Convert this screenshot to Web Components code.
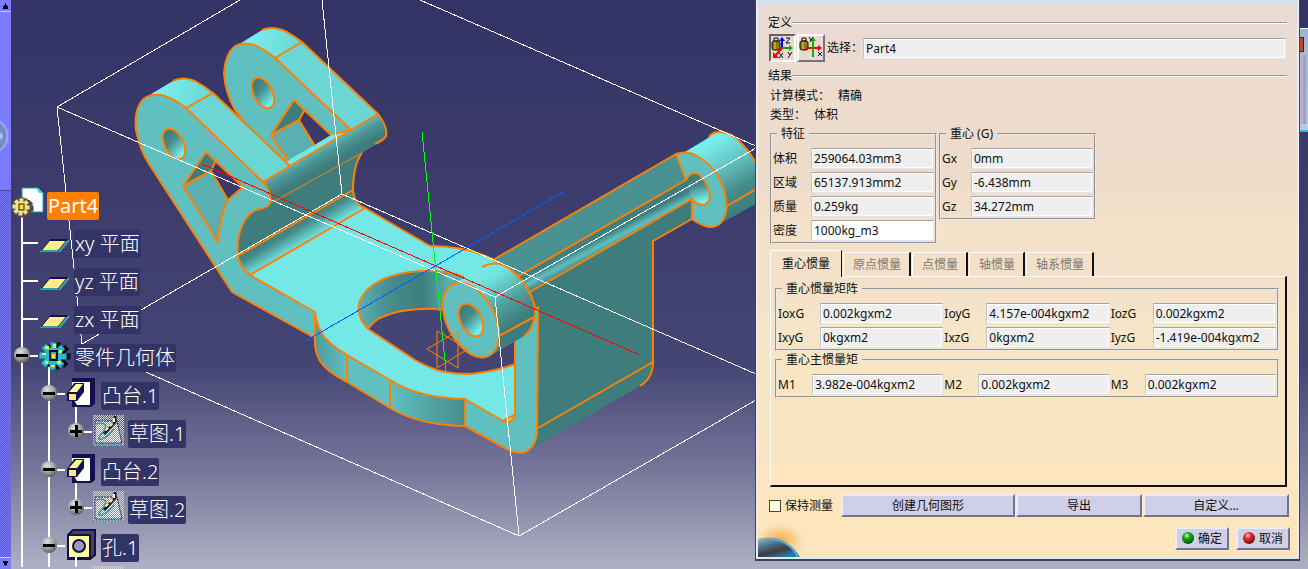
<!DOCTYPE html>
<html lang="zh-CN">
<head>
<meta charset="utf-8">
<title>Part4 - 测量惯量</title>
<style>
  body { margin: 0; background: #333366; font: 12px/16px "Noto Sans", "Noto Sans CJK SC", sans-serif; color: #101010; }
</style>
</head>
<body>
<cad-workspace>
  <tree-scroller slot="scroller"></tree-scroller>
  <part-scene slot="scene"></part-scene>
  <spec-tree slot="tree">
    <spec-node kind="part" label="Part4" selected></spec-node>
    <spec-node kind="plane" label="xy 平面"></spec-node>
    <spec-node kind="plane" label="yz 平面"></spec-node>
    <spec-node kind="plane" label="zx 平面"></spec-node>
    <spec-node kind="body" label="零件几何体"></spec-node>
    <spec-node kind="pad" label="凸台.1"></spec-node>
    <spec-node kind="sketch" label="草图.1"></spec-node>
    <spec-node kind="pad" label="凸台.2"></spec-node>
    <spec-node kind="sketch" label="草图.2"></spec-node>
    <spec-node kind="hole" label="孔.1"></spec-node>
  </spec-tree>
  <measure-dialog slot="dialog"></measure-dialog>
  <window-peek slot="peek"></window-peek>
</cad-workspace>

<script>
class ShadowElement extends HTMLElement {
  constructor() {
    super();
    this.attachShadow({ mode: "open" });
  }
  connectedCallback() {
    const t = document.createElement("template");
    t.innerHTML = this.render();
    this.shadowRoot.replaceChildren(t.content.cloneNode(true));
  }
}

customElements.define("cad-workspace", class extends ShadowElement {
  render() {
    return `<style>
      :host { position: relative; display: grid; grid-template-columns: 11px 1fr auto 8px; min-height: 100vh; overflow: hidden;
        background: linear-gradient(#333366 0, #3c3b6b 32%, #454575 64%, #77779c 83%, #b0b0c5 100%); }
      ::slotted([slot=scene]) { position: absolute; inset: 0; }
      ::slotted([slot=scroller]), ::slotted([slot=tree]), ::slotted([slot=dialog]), ::slotted([slot=peek]) { position: relative; }
      ::slotted([slot=tree]) { grid-column: 2; height: 0; }
    </style>
    <slot name="scene"></slot><slot name="scroller"></slot><slot name="tree"></slot><slot name="dialog"></slot><slot name="peek"></slot>`;
  }
});

customElements.define("tree-scroller", class extends ShadowElement {
  render() {
    return `<style>
      :host { display: flex; flex-direction: column; background: #7b7bff; overflow: hidden; }
      button { all: unset; flex: none; height: 11px; border-bottom: 1px solid #c8c8ff; display: grid; place-items: center; }
      button.down { border: 0; border-top: 1px solid #c8c8ff; }
      .thumb { flex: 178 0 0; }
      .track { flex: 368 0 0; background: repeating-conic-gradient(#7b7bff 0 25%, #5a5aae 0 50%) 0 0 / 2px 2px; border-top: 1px solid #4a4a90; }
      svg { display: block; }
    </style>
    <button type="button" aria-label="向上"><svg width="7" height="7"><path d="M3 1h1v2h1v1h1v3H1V4h1V3h1z"/></svg></button>
    <div class="thumb"><svg width="11" height="178"><circle cx="-10" cy="124" r="17.500" fill="#6f8fc8" stroke="#a5a5f2" stroke-width="2"/><path d="M-2 121h3v-2l2 5-2 5v-2h-3z" fill="#b9b9f5"/></svg></div>
    <div class="track"></div>
    <button type="button" class="down" aria-label="向下"><svg width="7" height="7"><path d="M1 1h5v2H5v2H4v1H3V5H2V3H1z"/></svg></button>`;
  }
});

customElements.define("part-scene", class extends ShadowElement {
  render() {
    return `<style>
      :host { display: block; overflow: hidden; }
      svg { display: block; }
      .edge { fill: none; stroke: #ff8000; stroke-width: 2; stroke-linejoin: round; }
      .thin { fill: none; stroke: #ff8000; stroke-width: 1; }
      .box { fill: none; stroke: #fff; stroke-width: 1; }
    </style>
    <svg width="756" height="569" role="img" aria-label="Part4">
      <defs>
        <linearGradient id="roll" gradientUnits="userSpaceOnUse" x1="310" y1="150" x2="323" y2="173"><stop offset="0" stop-color="#66c8c8"/><stop offset=".35" stop-color="#4f9b9b"/><stop offset=".8" stop-color="#3f7d7d"/></linearGradient>
        <linearGradient id="fillet" gradientUnits="userSpaceOnUse" x1="295" y1="222" x2="307" y2="242"><stop offset="0" stop-color="#3f7d7d"/><stop offset=".3" stop-color="#468a8a"/><stop offset="1" stop-color="#72e6e4"/></linearGradient>
        <linearGradient id="bore" x1=".4" y1="0" x2=".6" y2="1"><stop offset=".15" stop-color="#3f7d7d"/><stop offset=".4" stop-color="#478c8c"/><stop offset=".9" stop-color="#78eeec"/></linearGradient>
        <linearGradient id="wall" gradientUnits="userSpaceOnUse" x1="359" y1="0" x2="450" y2="0"><stop offset="0" stop-color="#5ab0b0"/><stop offset=".35" stop-color="#478b8b"/><stop offset=".7" stop-color="#3f7d7d"/><stop offset="1" stop-color="#5ab2b2"/></linearGradient>
        <linearGradient id="side1" gradientUnits="userSpaceOnUse" x1="315" y1="0" x2="347" y2="0"><stop offset="0" stop-color="#4e9b9b"/><stop offset="1" stop-color="#60c0c0"/></linearGradient>
        <linearGradient id="side2" gradientUnits="userSpaceOnUse" x1="390" y1="0" x2="465" y2="0"><stop offset="0" stop-color="#60c0c0"/><stop offset="1" stop-color="#478c8c"/></linearGradient>
        <linearGradient id="boss" gradientUnits="userSpaceOnUse" x1="470" y1="268" x2="518" y2="342"><stop offset="0" stop-color="#78eeec"/><stop offset=".25" stop-color="#70e0de"/><stop offset=".55" stop-color="#519f9f"/><stop offset=".8" stop-color="#3f7d7d"/></linearGradient>
        <linearGradient id="boss2" gradientUnits="userSpaceOnUse" x1="703" y1="138" x2="745" y2="208"><stop offset=".1" stop-color="#78eeec"/><stop offset=".4" stop-color="#66c8c8"/><stop offset=".75" stop-color="#478b8b"/><stop offset="1" stop-color="#3f7d7d"/></linearGradient>
        <linearGradient id="groove" gradientUnits="userSpaceOnUse" x1="600" y1="228" x2="610" y2="247"><stop offset="0" stop-color="#3f7d7d"/><stop offset=".4" stop-color="#418080"/><stop offset=".75" stop-color="#60c0c0"/><stop offset="1" stop-color="#4a9292"/></linearGradient>
        <linearGradient id="cap" gradientUnits="userSpaceOnUse" x1="160" y1="85" x2="205" y2="100"><stop offset="0" stop-color="#79efee"/><stop offset="1" stop-color="#6cd8d6"/></linearGradient>
        <linearGradient id="cap2" gradientUnits="userSpaceOnUse" x1="248" y1="35" x2="295" y2="50"><stop offset="0" stop-color="#79efee"/><stop offset="1" stop-color="#6cd8d6"/></linearGradient>
      </defs>

      <!-- far lug -->
      <path fill="#6bd6d4" d="M275 58 302 42 378 114 290 166 350 130Z"/>
      <path fill="url(#cap2)" d="M241 43 262 30Q273 26 287 32 294 36 302 42L275 58Q262 46 248 43Z"/>
      <path fill="#60c0c0" d="M275 58Q262 48 254 45 241 41 234 47 225 55 224 73 225 92 235 110L243 120 289 166 320 147 351 130Z"/>
      <path fill="#3f7d7d" d="M294 100 304 111 299 120 271 135Z"/>
      <path fill="#5ab0b0" d="M271 135 299 120 315 146 288 161Z"/>
      <path fill="#3a396a" d="M304 111 331 135 315 146 299 120Z"/>
      <path fill="#73e8e6" d="M287 161 333 134 351 130 289 166Z"/>
      <ellipse cx="263" cy="93" rx="9.500" ry="16.500" transform="rotate(-27 263 93)" fill="url(#bore)"/>
      <g class="edge">
        <path d="M262 30Q273 25 287 32 294 36 302 42L378 114M275 58 302 42M275 58Q262 48 254 45 241 41 234 47 225 55 224 73 225 92 235 110L243 120M275 58 351 130 333 134M294 100 271 135 288 161M294 100 331 135M304 111 299 120 271 135M299 120 315 146"/>
        <ellipse cx="263" cy="93" rx="9.500" ry="16.500" transform="rotate(-27 263 93)"/>
      </g>

      <!-- bent plate -->
      <path fill="#3f7d7d" d="M271 202 362 153Q355 165 354 190L238 256Q237 222 252 211L267 208Z"/>
      <path fill="url(#roll)" d="M263 182 378 114Q388 127 386 136 384 140 362 153L271 203Q271 190 263 182Z"/>
      <path fill="url(#fillet)" d="M238 256 353 190Q354 203 365 208L250 275Q240 268 238 256Z"/>

      <!-- near lug and side wall -->
      <path fill="#6bd6d4" d="M186 108 213 93 290 166 263 182Z"/>
      <path fill="url(#cap)" d="M151 94 173 81Q183 76 195 81 204 86 213 93L186 108Q172 96 158 95Z"/>
      <path fill="#60c0c0" d="M186 108Q174 99 165 96 148 92 141 102 134 112 136 130 140 150 149 164L232 292 315 338 315 312 250 275Q240 268 238 256 236 235 245 220 252 210 260 209 268 208 270 203 272 192 263 182Z"/>
      <path fill="#3f7d7d" d="M206 152 215 162 211 171 183 186Z"/>
      <path fill="#5ab0b0" d="M183 186 211 171 228 200Q219 217 218 242Z"/>
      <path fill="#3b3a6b" d="M215 162 243 187 228 200 211 171Z"/>
      <ellipse cx="174" cy="144" rx="9.500" ry="16.500" transform="rotate(-27 174 144)" fill="url(#bore)"/>

      <!-- floor -->
      <path fill="#73e8e6" d="M250 275 365 208 430 246Q470 246 498 262L520 300 515 417Q511 424 503 421L465 399Q432 398 410 390 398 386 390 380L347 355Q318 342 316 320L315 312Z"/>
      <path fill="#454575" d="M368 329Q352 311 363 295 378 274 420 271 445 269 464 277L515 330V364Q498 371 470 374 450 374 437 370 425 366 415 360Z"/>
      <path fill="url(#wall)" d="M368 329Q352 311 363 295 378 274 420 271 450 269 464 277L446 310Q436 308 420 309 396 310 380 318 373 322 368 329Z"/>
      <path fill="url(#side1)" d="M315 312Q316 330 330 343 337 349 347 355V382Q326 371 320 361 314 350 315 338Z"/>
      <path fill="#60c0c0" d="M347 355 390 380V408L347 382Z"/>
      <path fill="url(#side2)" d="M390 380Q418 398 465 399V426Q418 425 390 408Z"/>

      <!-- right-hand plate -->
      <path fill="#4a9292" d="M493 260 676 154 687 180 517 277Z"/>
      <path fill="url(#groove)" d="M517 277 687 179 692 199 528 293Z"/>
      <path fill="#3f7d7d" d="M528 293 692 199V219L653 241V362Q653 378 640 386L535 447V300Z"/>
      <path fill="#60c0c0" d="M515 330 538 307V428Q538 453 517 453 510 451 503 447L465 426V399L503 421Q513 424 515 415Z"/>

      <!-- far boss -->
      <path fill="url(#boss2)" d="M685 152 708 138Q712 132 720 132 732 132 742 144 750 152 756 163V204L716 226 726 206Q727 180 704 161Z"/>
      <path fill="#60c0c0" d="M676 154Q687 150 697 156 713 165 720 180 728 197 726 212 722 228 709 227 700 225 692 219V199Q697 205 704 205 712 202 709 190 705 179 698 174 690 171 686 180Z"/>
      <path fill="url(#bore)" d="M686 180Q692 170 700 176 706 181 709 190 711 203 704 205 697 204 692 199Z"/>

      <!-- near boss -->
      <path fill="url(#boss)" d="M452 285 483 266Q497 260 510 269 522 279 530 293 536 305 535 315 533 330 524 336L490 356Z"/>
      <ellipse cx="471" cy="320" rx="24" ry="40" transform="rotate(-27 471 320)" fill="#60c0c0"/>
      <ellipse cx="471" cy="320" rx="10.500" ry="17.500" transform="rotate(-27 471 320)" fill="url(#bore)"/>

      <g class="edge">
        <path d="M173 81Q183 76 195 81 204 86 213 93L290 166M186 108 213 93M186 108Q174 99 165 96 148 92 141 102 134 112 136 130 140 150 149 164L232 292 315 338M186 108 263 182Q272 192 270 203 268 208 260 209 252 210 245 220 236 235 238 256 240 268 250 275L315 312V338"/>
        <path d="M263 182 378 114Q388 127 386 136 384 140 375 144M238 256 353 190M250 275 365 208 430 246M362 153Q353 165 353 190 354 204 365 208"/>
        <path d="M206 152 183 186 218 242Q219 217 228 200L243 187 206 152M215 162 211 171 183 186M211 171 228 200"/>
        <ellipse cx="174" cy="144" rx="9.500" ry="16.500" transform="rotate(-27 174 144)"/>
        <path d="M430 246Q470 246 498 262M315 312Q316 330 330 343 337 349 347 355L390 380Q418 398 465 399L503 421Q513 424 515 415V342M503 421 514 415"/>
        <path d="M315 338Q314 350 320 361 326 371 347 382L390 408Q418 425 465 426L503 447Q517 456 527 451 538 443 537 428L538 307 534 311M347 355V382M390 380V408M465 399V426"/>
        <path d="M464 277Q450 270 420 271 378 274 363 295 352 311 368 329L415 360Q425 366 437 370 450 374 470 374 498 371 515 364M368 329Q373 322 380 318 396 310 420 309 436 308 442 310"/>
        <path d="M493 260 676 154 686 180 517 277M528 293 692 199V219L653 241V362Q653 378 640 386M538 428 653 362"/>
        <path d="M709 137Q712 132 720 132 732 132 742 144 750 152 756 163M676 154Q687 150 697 156 713 165 720 180 728 197 726 212 722 228 709 227 700 225 692 219M692 199Q697 205 704 205 712 202 709 190 705 179 698 174 690 171 686 180M727 206 756 189"/>
        <path d="M482 267Q497 259 510 269 522 279 530 293 536 305 535 315 533 330 524 336M499 336 534 317"/>
        <ellipse cx="471" cy="320" rx="24" ry="40" transform="rotate(-27 471 320)"/>
        <ellipse cx="471" cy="320" rx="10.500" ry="17.500" transform="rotate(-27 471 320)"/>
      </g>
      <path class="thin" d="M271 203 362 153M437 331V368M458 331V368M427 349 458 331M427 349 458 368M468 349 437 331M468 349 437 368"/>

      <g class="box" shape-rendering="crispEdges">
        <path d="M240 0 57 107 82 344 342 194 322 0M57 107 495 297 756 148M82 344 519 536 756 400M342 194 756 374M420 0 756 146M495 297 519 536"/>
      </g>
      <g fill="none" shape-rendering="crispEdges">
        <path stroke="#f00" d="M202 164 640 355"/>
        <path stroke="#0f0" d="M422 132 446 371"/>
        <path stroke="#0060ff" d="M565 191 304 342"/>
      </g>
    </svg>`;
  }
});

customElements.define("spec-tree", class extends ShadowElement {
  render() {
    return `<style>
      :host { display: block; padding-top: 187px; justify-self: start; }
      div { display: flex; flex-direction: column; }
    </style><div role="tree"><slot></slot></div>`;
  }
});

const gear = (cx, cy, r, fill, edge) => {
  let teeth = "";
  for (let a = 0; a < 360; a += 45) teeth += `<rect x="${cx - 2}" y="${cy - r}" width="5" height="${r}" fill="${fill}" stroke="${edge}" transform="rotate(${a} ${cx} ${cy})"/>`;
  return teeth + `<circle cx="${cx}" cy="${cy}" r="${r * 0.68}" fill="${fill}"/>`;
};
const ball = (cx, plus) => `<circle cx="${cx}" cy="16" r="8" fill="url(#ball)"/><path d="M${cx - 6} 15h12v3h-12z${plus ? `M${cx - 1} 10h3v12h-3z` : ""}"/>`;
const line = (x, y, w, h) => `<rect x="${x}" y="${y}" width="${w}" height="${h}" fill="#fff"/>`;
const trunk = line(10, 0, 2, 38);
const ART = {
  part: [36, () => line(10, 29, 2, 9) +
    `<path d="M11 1h16l5 5v19H11z" fill="#fff" stroke="#18a0a8"/><path d="M25 1h2l5 5h-4z" fill="#40d8e0"/><g transform="translate(3 1)">${gear(10, 20, 9, "#4a4650", "#4a4650")}</g>${gear(10, 20, 9, "#f5df95", "#5a5030")}<rect x="8" y="17" width="5" height="6" fill="#f4e800" stroke="#222"/>`],
  plane: [63, () => trunk + line(12, 17, 15, 2) +
    `<path d="M39 15H57L49 26H30z" fill="#ffee88"/><path d="M39 15H57" stroke="#141050" stroke-width="2"/><path d="M58 15 49 26H29" fill="none" stroke="#30a0a8" stroke-width="2"/><path d="M39 15 30 26M55 16 47 26" stroke="#141050" fill="none"/>`],
  body: [63, () => trunk + line(19, 16, 8, 2) + line(37, 28, 2, 10) + ball(11) +
    `<g transform="translate(3 0)">${gear(43, 17, 13, "#0a0a18", "#0a0a18")}</g>${gear(42, 17, 13, "#22c0cc", "#22c0cc")}<g fill="#f6f03c"><path d="M34 7h4v3h-4zM42 5h3v4h-3zM31 14h4v2h-4zM48 11h3v3h-3zM34 22h3v3h-3zM46 22h4v3h-4zM40 26h4v2h-4z"/></g><rect x="39" y="12" width="7" height="9" fill="#22c0cc" stroke="#0a0a18" stroke-width="2"/><rect x="41" y="15" width="3" height="4" fill="#f6f03c"/>`],
  pad: [90, () => trunk + line(37, 0, 2, 38) + line(46, 16, 8, 2) + line(64, 30, 2, 8) + ball(38) +
    `<path d="M61 1H84V27L80 30H61z" fill="#141050"/><path d="M61 5H79V28H66L61 20z" fill="#fff"/><path d="M56 16 63 6H73V15L66 24H56z" fill="#141050"/><path d="M58 15 65 7H72L66 15z" fill="#ffff9c"/><path d="M58 17H65V23H58z" fill="#ffee70"/>`],
  sketch: [117, () => trunk + line(37, 0, 2, 38) + line(64, 0, 2, 9) + line(73, 16, 8, 2) + ball(65, true) +
    `<rect x="82" y="0" width="31" height="31" fill="url(#dots)"/><path d="M84 6H106L111 28H84z" fill="url(#mesh)" stroke="#141050" stroke-dasharray="2 1"/><path d="M84 9Q100 6 92 17 84 26 91 24 98 21 103 14" fill="none" stroke="#3898a0" stroke-width="1.500"/><path d="M104 1V7L93 19" fill="none" stroke="#141050" stroke-width="3"/><path d="M103 3V7L93 17" fill="none" stroke="#fff38c" stroke-width="2" stroke-dasharray="4 2"/><path d="M82 30H113" stroke="#40a8a8" stroke-width="2" stroke-dasharray="2 1"/>`],
  hole: [90, () => trunk + line(37, 0, 2, 38) + line(46, 16, 8, 2) + ball(38) +
    `<path d="M57 6 62 1H84V26L79 30H57z" fill="#484848" stroke="#141050" stroke-width="2"/><rect x="57" y="6" width="22" height="23" fill="#ffff9c" stroke="#141050" stroke-width="2"/><circle cx="68" cy="17" r="6" fill="#9a9ab4" stroke="#141050" stroke-width="2"/>` + line(64, 27, 2, 11) + `<rect x="82" y="37" width="31" height="3" fill="url(#dots)"/>`],
};
customElements.define("spec-node", class extends ShadowElement {
  render() {
    const [w, art] = ART[this.getAttribute("kind")];
    return `<style>
      :host { display: flex; align-items: center; height: 38px; font: 300 20px/28px "Noto Sans", "Noto Sans CJK SC", sans-serif; color: #fff; }
      svg { display: block; overflow: visible; flex: none; }
      span { padding: 0 1px; border-radius: 2px; background: #333366; white-space: nowrap; }
      :host([selected]) span { background: #ff8000; font-weight: 400; }
    </style>
    <svg width="${w}" height="38" aria-hidden="true"><defs>
      <radialGradient id="ball" cx=".4" cy=".3" r=".7"><stop offset="0" stop-color="#e0e0e0"/><stop offset=".6" stop-color="#a0a0a0"/><stop offset="1" stop-color="#606060"/></radialGradient>
      <pattern id="dots" width="2" height="2" patternUnits="userSpaceOnUse"><path d="M0 0h1v1h-1zM1 1h1v1h-1z" fill="#d0d0d4"/></pattern>
      <pattern id="mesh" width="2" height="2" patternUnits="userSpaceOnUse"><path d="M0 0h2v2h-2z" fill="#8c8cac"/><path d="M0 0h1v1h-1zM1 1h1v1h-1z" fill="#fff"/></pattern>
    </defs>${art()}</svg><span role="treeitem">${this.getAttribute("label")}</span>`;
  }
});

customElements.define("measure-field", class extends ShadowElement {
  render() {
    return `<style>
      :host { display: flex; align-items: center; height: 21px; min-width: 0; }
      label { flex: none; width: var(--label-width, 38px); white-space: nowrap; }
      input { flex: 1; min-width: 0; height: 21px; box-sizing: border-box; margin: 0; padding: 0 2px; border: 1px solid; border-color: #a4a4a4 #e2e4ee #e2e4ee #c4c4c8; outline: 0;
        box-shadow: inset 0 0 0 1px #fff; background: #efefef; color: inherit; font: inherit; border-radius: 0; }
      :host([editable]) input { background: #fff; }
    </style>
    <label for="v">${this.getAttribute("label")}</label><input id="v" type="text" value="${this.getAttribute("value")}"${this.hasAttribute("editable") ? "" : " readonly"}>`;
  }
});

customElements.define("field-group", class extends ShadowElement {
  render() {
    return `<style>
      :host { display: block; }
      fieldset { position: relative; margin: 0; min-width: 0; padding: 6px 2px 2px 1px; border: 1px solid #999; box-shadow: none; }
      fieldset { border: 1px solid #999; padding: 6px 2px 2px; }
      legend { margin-left: 4px; padding: 0 4px; height: 16px; }
      div { display: grid; grid-template-columns: repeat(var(--columns, 1), minmax(0, 1fr)); gap: 3px 1px; }
      fieldset { border: 2px groove #fff; border-color: #e8e8e8; padding: 6px 1px 1px; }
    </style>
    <fieldset><legend>${this.getAttribute("legend")}</legend><div><slot></slot></div></fieldset>`;
  }
});

customElements.define("section-rule", class extends ShadowElement {
  render() {
    return `<style>
      :host { display: flex; align-items: center; height: 16px; }
      :host::after { content: ""; flex: 1; height: 1px; background: #999; border-bottom: 1px solid #fff; }
    </style><slot></slot>`;
  }
});

customElements.define("bevel-button", class extends ShadowElement {
  render() {
    return `<style>
      :host { display: block; }
      button { width: 100%; height: 23px; margin: 0; padding: 0; display: flex; align-items: center; justify-content: center; gap: 3px; border: 2px solid; border-color: #ececf6 #73738c #73738c #ececf6; background: #cfcfe7; color: inherit; font: inherit; white-space: nowrap; border-radius: 0; }
    </style><button type="button"><slot></slot></button>`;
  }
});

customElements.define("tab-strip", class extends ShadowElement {
  render() {
    const tabs = this.getAttribute("tabs").split(" ");
    return `<style>
      :host { display: block; }
      [role=tablist] { display: flex; align-items: flex-end; gap: 1px; height: 26px; }
      button { height: 24px; margin: 0; padding: 0 8px; border: solid; border-width: 1px 2px 0 1px; border-color: #fff #111 #fff #fff; border-radius: 2px 0 0 0; background: none; color: #7d7872; font: inherit; white-space: nowrap; }
      button[aria-selected=true] { height: 27px; margin-bottom: -1px; padding: 0 11px; border-right-width: 1px; background: #f3e1c9; color: #101010; }
      button:nth-child(n+2) { padding: 0 8px 0 9px; }
      section { box-sizing: border-box; min-height: 211px; padding: 4px 6px 4px 4px; border: solid; border-width: 1px 2px 2px 1px; border-color: #fff #111 #111 #fff; display: flex; flex-direction: column; gap: 1px; }
    </style>
    <div role="tablist">${tabs.map((t, i) => `<button type="button" role="tab" aria-selected="${i === 0}">${t}</button>`).join("")}</div>
    <section role="tabpanel"><slot></slot></section>`;
  }
});

const weight = `<path d="M3 2h4v3H3z" fill="none" stroke="#111"/><rect x="1" y="5" width="8" height="9" rx="2" fill="#8f7a10" stroke="#111"/><path d="M4 6v7" stroke="#e6d24a"/>`;
customElements.define("measure-dialog", class extends ShadowElement {
  render() {
    return `<style>
      :host { display: block; align-self: start; width: 545px; box-sizing: border-box; border: solid; border-width: 0 1px 2px; border-color: #444450; }
      form { position: relative; padding: 11px 10px 7px; border: solid; border-width: 4px 2px 2px; border-color: #d5e1ef #e9ebf5 #dcebf2 #e9ebf5;
        background: linear-gradient(#e8dad6 0, #eddccc 18%, #eedccb 32%, #f4e2c8 42%, #f2e0ca 48%, #f6e5c6 60%, #fde5be 90%); }
      .planet { position: absolute; left: 0; bottom: 0; display: block; }
      .pick { display: flex; align-items: center; gap: 1px; height: 28px; margin: 3px 1px 6px; }
      .pick button { flex: none; width: 28px; height: 28px; margin: 0; padding: 0; border: 2px solid; border-color: #fff #77737a #77737a #fff; background: #ead9d2; }
      .pick button.on { border-color: #66626a #fff #fff #66626a; width: 27px; }
      .pick svg { display: block; }
      .pick measure-field { flex: 1; --label-width: 36px; margin-left: 1px; }
      dl { margin: 2px 0 0 2px; line-height: 19px; }
      dl div { display: flex; gap: 8px; }
      dd, dt { margin: 0; }
      .groups { display: flex; align-items: flex-start; gap: 2px; margin: 2px 0 6px 2px; }
      .traits { width: 167px; }
      .centre { width: 157px; --label-width: 29px; }
      .matrix { --columns: 3; --label-width: 42px; }
      .principal { --columns: 3; --label-width: 34px; }
      tab-strip { margin-left: 2px; }
      .actions { display: flex; align-items: center; gap: 1px; margin: 7px -2px 0 1px; }
      .keep { display: flex; align-items: center; gap: 4px; width: 71px; flex: none; white-space: nowrap; }
      .keep input { appearance: none; width: 12px; height: 12px; margin: 0; border: 1px solid #444; background: #ffffe0; }
      .wide { flex: 174; } .mid { flex: 126; } .last { flex: 146; }
      .confirm { display: flex; justify-content: flex-end; gap: 7px; margin: 10px -3px 0 0; }
      .confirm bevel-button { width: 54px; }
      .led { display: block; }
    </style>
    <form>
      <svg class="planet" width="52" height="36" aria-hidden="true"><defs>
        <radialGradient id="glow"><stop offset="0" stop-color="#f5a040"/><stop offset=".6" stop-color="#f9cf88" stop-opacity=".7"/><stop offset="1" stop-color="#fde5be" stop-opacity="0"/></radialGradient>
        <linearGradient id="globe" x1="0" y1="0" x2=".6" y2="1"><stop offset="0" stop-color="#9cc4cc"/><stop offset=".4" stop-color="#4a7288"/><stop offset=".7" stop-color="#403c40"/><stop offset="1" stop-color="#2878b0"/></linearGradient></defs>
        <ellipse cx="22" cy="20" rx="28" ry="20" fill="url(#glow)"/><path d="M0 18Q14 14 27 21 37 27 42 36H0z" fill="url(#globe)"/><path d="M14 18Q32 20 40 36" fill="none" stroke="#58acd8" stroke-width="2"/></svg>
      <section-rule>定义</section-rule>
      <div class="pick">
        <button type="button" class="on" aria-label="测量惯量"><svg width="23" height="24">${weight}<g fill="none" stroke-width="2"><path d="M11 12V3" stroke="#00f"/><path d="M8 5 11 1 14 5z" fill="#00f"/><path d="M11 12H20" stroke="#0a0"/><path d="M18 9 22 12 18 15z" fill="#0b0"/><path d="M11 12 4 20" stroke="#f00"/><path d="M2 16V22H8z" fill="#f00"/></g><path d="M15 2H19L15 7H19M8 17 12 22M12 17 8 22M17 16 19 19 21 16M19 19 17 22" fill="none" stroke="#111"/></svg></button>
        <button type="button" aria-label="测量2D惯量"><svg width="24" height="24">${weight}<path d="M14 21V4M10 12H21" stroke="#0a0" stroke-width="2"/><path d="M7 12H20" stroke="#f00" stroke-width="2"/><path d="M19 9 23 12 19 15z" fill="#f00"/><path d="M14 20V4" stroke="#0b0" stroke-width="2"/><path d="M11 5 14 1 17 5z" fill="#0b0"/><path d="M10 1 12 4M14 1 11 6M19 16 23 20M23 16 19 20" fill="none" stroke="#111"/></svg></button>
        <measure-field label="选择：" value="Part4"></measure-field>
      </div>
      <section-rule>结果</section-rule>
      <dl><div><dt>计算模式：</dt><dd>精确</dd></div><div><dt>类型：</dt><dd>体积</dd></div></dl>
      <div class="groups">
        <field-group class="traits" legend="特征">
          <measure-field label="体积" value="259064.03mm3"></measure-field>
          <measure-field label="区域" value="65137.913mm2"></measure-field>
          <measure-field label="质量" value="0.259kg"></measure-field>
          <measure-field label="密度" value="1000kg_m3" editable></measure-field>
        </field-group>
        <field-group class="centre" legend="重心 (G)">
          <measure-field label="Gx" value="0mm"></measure-field>
          <measure-field label="Gy" value="-6.438mm"></measure-field>
          <measure-field label="Gz" value="34.272mm"></measure-field>
        </field-group>
      </div>
      <tab-strip tabs="重心惯量 原点惯量 点惯量 轴惯量 轴系惯量">
        <field-group class="matrix" legend="重心惯量矩阵">
          <measure-field label="IoxG" value="0.002kgxm2"></measure-field>
          <measure-field label="IoyG" value="4.157e-004kgxm2"></measure-field>
          <measure-field label="IozG" value="0.002kgxm2"></measure-field>
          <measure-field label="IxyG" value="0kgxm2"></measure-field>
          <measure-field label="IxzG" value="0kgxm2"></measure-field>
          <measure-field label="IyzG" value="-1.419e-004kgxm2"></measure-field>
        </field-group>
        <field-group class="principal" legend="重心主惯量矩">
          <measure-field label="M1" value="3.982e-004kgxm2"></measure-field>
          <measure-field label="M2" value="0.002kgxm2"></measure-field>
          <measure-field label="M3" value="0.002kgxm2"></measure-field>
        </field-group>
      </tab-strip>
      <div class="actions">
        <label class="keep"><input type="checkbox">保持测量</label>
        <bevel-button class="wide">创建几何图形</bevel-button>
        <bevel-button class="mid">导出</bevel-button>
        <bevel-button class="last">自定义...</bevel-button>
      </div>
      <div class="confirm">
        <bevel-button><svg class="led" width="13" height="13"><defs><radialGradient id="g" cx=".4" cy=".3" r=".7"><stop offset="0" stop-color="#c8ffc0"/><stop offset=".35" stop-color="#18b018"/><stop offset="1" stop-color="#045004"/></radialGradient></defs><circle cx="6" cy="6" r="6" fill="url(#g)"/></svg>确定</bevel-button>
        <bevel-button><svg class="led" width="13" height="13"><defs><radialGradient id="r" cx=".4" cy=".3" r=".7"><stop offset="0" stop-color="#ffd8d0"/><stop offset=".35" stop-color="#e83030"/><stop offset="1" stop-color="#701008"/></radialGradient></defs><circle cx="6" cy="6" r="6" fill="url(#r)"/></svg>取消</bevel-button>
      </div>
    </form>`;
  }
});

customElements.define("window-peek", class extends ShadowElement {
  render() {
    return `<style>
      :host { display: block; align-self: start; margin-top: 28px; height: 101px; border-top: 1px solid #fff; border-bottom: 2px solid #30b8d8; background: linear-gradient(#9ab6d2, #b4cce6); }
      i { display: block; box-sizing: border-box; width: 4px; height: 15px; margin-top: 8px; background: #c04430; border: solid #501820; border-width: 1px 1px 1px 0; }
      b { display: block; width: 6px; height: 69px; margin-top: 3px; background: linear-gradient(90deg, #c0b8d8, #9c9cb4); }
    </style><i></i><b></b>`;
  }
});
</script>
</body>
</html>
